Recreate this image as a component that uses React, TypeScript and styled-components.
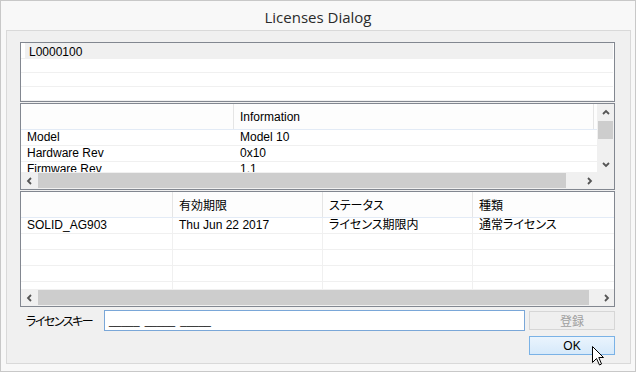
import React from 'react';
import styled, {createGlobalStyle} from 'styled-components';

const GlobalStyle = createGlobalStyle`
  html, body {
    margin: 0;
    padding: 0;
    background: #ffffff;
  }

  body {
    font-family: "Liberation Sans", "Noto Sans CJK JP", sans-serif;
    font-size: 12px;
    color: #000000;
    font-feature-settings: "palt";
  }
`

const Window = styled.div`
  position: relative;
  width: 636px;
  height: 372px;
  box-sizing: border-box;
  border: 1px solid #c8c8c8;
  background: #f8f8f8;
  display: flex;
  flex-direction: column;
`

const TitleBar = styled.div`
  height: 29px;
  flex-shrink: 0;
  display: flex;
  align-items: center;
  justify-content: center;
  padding-top: 2px;
  box-sizing: border-box;
  font-family: "Open Sans", "Noto Sans", sans-serif;
  font-size: 15px;
  color: #2b2b2b;
`

const Panel = styled.div`
  height: 334px;
  margin: 0 4px 0 5px;
  box-sizing: border-box;
  border: 1px solid #d9d9d9;
  background: #f0f0f0;
  padding: 11px 15px 0 13px;
  display: flex;
  flex-direction: column;
  gap: 1px;
`

const ListBox = styled.div<{ $height: number }>`
  height: ${props => props.$height}px;
  flex-shrink: 0;
  box-sizing: border-box;
  border: 1px solid #828790;
  background: #ffffff;
  display: flex;
  flex-direction: column;
  overflow: hidden;
`

const Body = styled.div`
  flex: 1;
  min-height: 0;
  display: flex;
  overflow: hidden;
`

const Viewport = styled.div`
  flex: 1;
  min-width: 0;
  overflow: hidden;
`

const ListRow = styled.div`
  height: 16px;
  box-sizing: border-box;
  border-bottom: 1px solid #f0f0f0;
  margin-right: 1px;
  display: flex;
`

const ListItem = styled.div<{ $selected?: boolean }>`
  flex: 1;
  margin-left: 4px;
  padding: 1px 0 0 4px;
  line-height: 16px;
  background: ${props => (props.$selected ? '#f0f0f0' : 'transparent')};
`

const HeaderRow = styled.div<{ $cols: string; $height: number }>`
  display: grid;
  grid-template-columns: ${props => props.$cols};
  height: ${props => props.$height}px;
  box-sizing: border-box;
  border-bottom: 1px solid #e3ebf6;
  background: #fdfdfd;
`

const HeaderCell = styled.div<{ $divider?: boolean }>`
  display: flex;
  align-items: center;
  padding-left: 6px;
  white-space: nowrap;
  overflow: hidden;
  border-right: 1px solid ${props => (props.$divider ? '#e5e5e5' : 'transparent')};
`

const TableRow = styled.div<{ $cols: string }>`
  display: grid;
  grid-template-columns: ${props => props.$cols};
  height: 16px;
  box-sizing: border-box;
  border-bottom: 1px solid #f0f0f0;
`

const Cell = styled.div<{ $lines?: boolean }>`
  padding-left: 6px;
  line-height: 15px;
  white-space: nowrap;
  overflow: hidden;
  border-right: 1px solid ${props => (props.$lines ? '#f0f0f0' : 'transparent')};
`

const HScroll = styled.div`
  height: 17px;
  flex-shrink: 0;
  display: flex;
  background: #f0f0f0;
`

const VScroll = styled.div`
  width: 17px;
  flex-shrink: 0;
  display: flex;
  flex-direction: column;
  background: #f0f0f0;
`

const ArrowButton = styled.div`
  width: 17px;
  height: 17px;
  flex-shrink: 0;
  display: flex;
  align-items: center;
  justify-content: center;
`

const Track = styled.div<{ $vertical?: boolean }>`
  flex: 1;
  display: flex;
  flex-direction: ${props => (props.$vertical ? 'column' : 'row')};
  padding: ${props => (props.$vertical ? '0 1px' : '1px 0')};
`

const Thumb = styled.div<{ $vertical?: boolean; $size: number }>`
  background: #cdcdcd;
  ${props => (props.$vertical ? `height: ${props.$size}px;` : `width: ${props.$size}px;`)}
`

const Corner = styled.div`
  width: 17px;
  flex-shrink: 0;
`

const KeyRow = styled.div`
  height: 21px;
  margin-top: 2px;
  display: flex;
  align-items: center;
`

const KeyLabel = styled.div`
  width: 84px;
  padding-left: 6px;
  box-sizing: border-box;
  flex-shrink: 0;
  letter-spacing: -1.5px;
`

const KeyInput = styled.div`
  width: 421px;
  height: 21px;
  margin-right: 4px;
  box-sizing: border-box;
  border: 1px solid #7aa7d8;
  background: #ffffff;
  padding: 0 4px;
  display: flex;
  align-items: center;
  white-space: pre;
  font-size: 11px;
  word-spacing: 2px;
`

const ButtonRow = styled.div`
  margin-top: 4px;
  display: flex;
  justify-content: flex-end;
`

const DialogButton = styled.div<{ $disabled?: boolean }>`
  width: 86px;
  height: 19px;
  box-sizing: border-box;
  display: flex;
  align-items: center;
  justify-content: center;
  border: 1px solid ${props => (props.$disabled ? '#d6d6d6' : '#7ab2e6')};
  background: ${props => (props.$disabled ? '#efefef' : 'linear-gradient(#eaf4fd, #d6e9fa)')};
  color: ${props => (props.$disabled ? '#a0a0a0' : '#000000')};
`

const Cursor = styled.svg`
  position: absolute;
  left: 591px;
  top: 345px;
`

type Dir = 'left' | 'right' | 'up' | 'down'

const chevrons: Record<Dir, string> = {
  left: '5,1 2,4 5,7',
  right: '3,1 6,4 3,7',
  up: '1,5 4,2 7,5',
  down: '1,3 4,6 7,3',
}

function Arrow({dir}: { dir: Dir }) {
  return (
    <ArrowButton>
      <svg width="8" height="8" viewBox="0 0 8 8">
        <polyline points={chevrons[dir]} fill="none" stroke="#555555" strokeWidth="1.8"/>
      </svg>
    </ArrowButton>
  )
}

const infoCols = '213px 360px 1fr'
const licenseCols = '152px 150px 150px 1fr'

const infoRows = [
  ['Model', 'Model 10'],
  ['Hardware Rev', '0x10'],
  ['Firmware Rev', '1.1'],
]

const licenseRows = [
  ['SOLID_AG903', 'Thu Jun 22 2017', 'ライセンス期限内', '通常ライセンス'],
  ['', '', '', ''],
  ['', '', '', ''],
  ['', '', '', ''],
  ['', '', '', ''],
]

function App() {
  return (
    <Window>
      <GlobalStyle/>
      <TitleBar>Licenses Dialog</TitleBar>
      <Panel>
        <ListBox $height={60}>
          <ListRow><ListItem $selected>L0000100</ListItem></ListRow>
          <ListRow><ListItem/></ListRow>
          <ListRow><ListItem/></ListRow>
          <ListRow><ListItem/></ListRow>
        </ListBox>

        <ListBox $height={87}>
          <Body>
            <Viewport>
              <HeaderRow $cols={infoCols} $height={26}>
                <HeaderCell $divider/>
                <HeaderCell $divider>Information</HeaderCell>
                <HeaderCell/>
              </HeaderRow>
              {infoRows.map(row => (
                <TableRow key={row[0]} $cols={infoCols}>
                  <Cell>{row[0]}</Cell>
                  <Cell>{row[1]}</Cell>
                  <Cell/>
                </TableRow>
              ))}
            </Viewport>
            <VScroll>
              <Arrow dir="up"/>
              <Track $vertical><Thumb $vertical $size={18}/></Track>
              <Arrow dir="down"/>
            </VScroll>
          </Body>
          <HScroll>
            <Arrow dir="left"/>
            <Track><Thumb $size={528}/></Track>
            <Arrow dir="right"/>
            <Corner/>
          </HScroll>
        </ListBox>

        <ListBox $height={116}>
          <Body>
            <Viewport>
              <HeaderRow $cols={licenseCols} $height={26}>
                <HeaderCell $divider/>
                <HeaderCell $divider>有効期限</HeaderCell>
                <HeaderCell $divider>ステータス</HeaderCell>
                <HeaderCell>種類</HeaderCell>
              </HeaderRow>
              {licenseRows.map((row, i) => (
                <TableRow key={i} $cols={licenseCols}>
                  <Cell $lines>{row[0]}</Cell>
                  <Cell $lines>{row[1]}</Cell>
                  <Cell $lines>{row[2]}</Cell>
                  <Cell>{row[3]}</Cell>
                </TableRow>
              ))}
            </Viewport>
          </Body>
          <HScroll>
            <Arrow dir="left"/>
            <Track><Thumb $size={551}/></Track>
            <Arrow dir="right"/>
          </HScroll>
        </ListBox>

        <KeyRow>
          <KeyLabel>ライセンスキー</KeyLabel>
          <KeyInput>_____ _____ _____</KeyInput>
          <DialogButton $disabled>登録</DialogButton>
        </KeyRow>

        <ButtonRow>
          <DialogButton>OK</DialogButton>
        </ButtonRow>
      </Panel>

      <Cursor width="13" height="20" viewBox="0 0 13 20">
        <polygon points="0.5,0.5 0.5,16.5 4.5,12.5 7.5,19 9.5,18 6.8,11.5 11.5,11.5" fill="#ffffff" stroke="#000000" strokeWidth="1"/>
      </Cursor>
    </Window>
  );
}

export default App;
